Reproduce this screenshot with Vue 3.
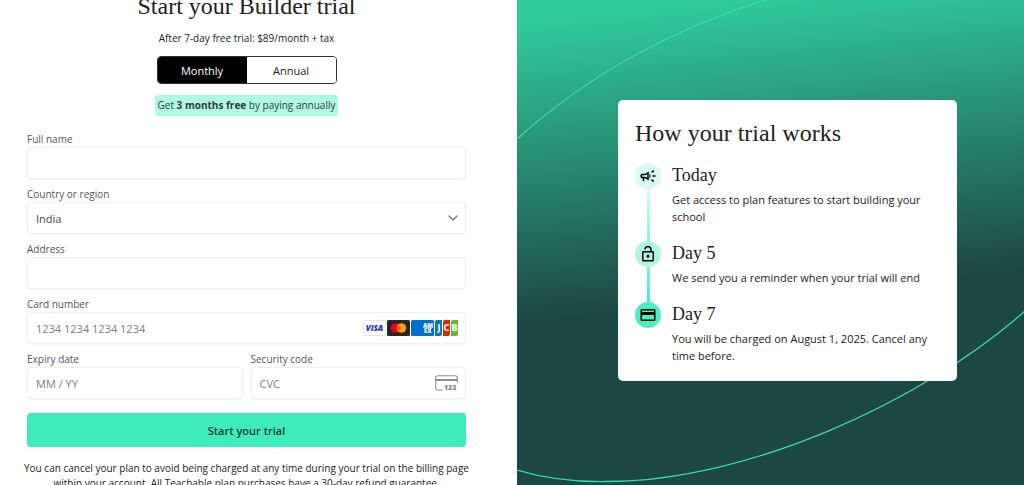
<script setup>
import { ref } from 'vue'

const plan = ref('monthly')
const country = ref('India')
const steps = [
  { id: 'today', title: 'Today', text: 'Get access to plan features to start building your school' },
  { id: 'reminder', title: 'Day 5', text: 'We send you a reminder when your trial will end' },
  { id: 'charge', title: 'Day 7', text: 'You will be charged on August 1, 2025. Cancel any time before.' },
]
</script>

<template>
  <main class="page">
    <section class="checkout">
      <h1 class="title">Start your Builder trial</h1>
      <p class="price">After 7-day free trial: $89/month + tax</p>
      <div class="toggle" role="group" aria-label="Billing period">
        <button type="button" :class="{ active: plan === 'monthly' }" :aria-pressed="plan === 'monthly'" @click="plan = 'monthly'">Monthly</button>
        <button type="button" :class="{ active: plan === 'annual' }" :aria-pressed="plan === 'annual'" @click="plan = 'annual'">Annual</button>
      </div>
      <p class="offer">Get <strong>3 months free</strong> by paying annually</p>

      <form class="form" @submit.prevent>
        <div class="field">
          <label for="name">Full name</label>
          <input id="name" type="text" class="control" />
        </div>
        <div class="field">
          <label for="country">Country or region</label>
          <div class="wrap">
            <select id="country" v-model="country" class="control">
              <option>India</option>
            </select>
            <svg class="chevron" width="10" height="6" viewBox="0 0 10 6" aria-hidden="true">
              <path d="M1 1l4 4 4-4" fill="none" stroke="#6f6f7c" stroke-width="1.3" stroke-linecap="round" stroke-linejoin="round" />
            </svg>
          </div>
        </div>
        <div class="field">
          <label for="address">Address</label>
          <input id="address" type="text" class="control" />
        </div>
        <div class="field">
          <label for="card">Card number</label>
          <div class="wrap">
            <input id="card" type="text" class="control" placeholder="1234 1234 1234 1234" />
            <div class="adorn brands" aria-hidden="true">
              <svg width="23" height="16" viewBox="0 0 23 16">
                <rect x=".5" y=".5" width="22" height="15" rx="1.5" fill="#fff" stroke="#e4e4e8" />
                <text x="11.5" y="11" text-anchor="middle" class="logo visa">VISA</text>
              </svg>
              <svg width="23" height="16" viewBox="0 0 23 16">
                <rect width="23" height="16" rx="1.5" fill="#252525" />
                <circle cx="8.6" cy="8" r="4.8" fill="#eb001b" />
                <circle cx="14.4" cy="8" r="4.8" fill="#f79e1b" />
                <path d="M11.5 4.2a4.8 4.8 0 0 1 0 7.6 4.8 4.8 0 0 1 0-7.6z" fill="#ff5f00" />
              </svg>
              <svg width="23" height="16" viewBox="0 0 23 16">
                <rect width="23" height="16" rx="1.5" fill="#016fd0" />
                <text x="12" y="7.5" class="logo amex">AM</text>
                <text x="13" y="13" class="logo amex">EX</text>
              </svg>
              <svg width="23" height="16" viewBox="0 0 23 16">
                <path d="M2 0h5v14a2 2 0 0 1-2 2H0V2a2 2 0 0 1 2-2z" fill="#047ab1" />
                <path d="M10 0h5v14a2 2 0 0 1-2 2H8V2a2 2 0 0 1 2-2z" fill="#d42d06" />
                <path d="M18 0h5v14a2 2 0 0 1-2 2h-5V2a2 2 0 0 1 2-2z" fill="#67b637" />
                <text x="4" y="11" text-anchor="middle" class="logo jcb">J</text>
                <text x="11.5" y="11" text-anchor="middle" class="logo jcb">C</text>
                <text x="19.5" y="11" text-anchor="middle" class="logo jcb">B</text>
              </svg>
            </div>
          </div>
        </div>
        <div class="row">
          <div class="field">
            <label for="expiry">Expiry date</label>
            <input id="expiry" type="text" class="control" placeholder="MM / YY" />
          </div>
          <div class="field">
            <label for="cvc">Security code</label>
            <div class="wrap">
              <input id="cvc" type="text" class="control" placeholder="CVC" />
              <svg class="adorn" width="23" height="16" viewBox="0 0 23 16" aria-hidden="true">
                <path d="M7.5 15H3A2.3 2.3 0 0 1 .7 12.7V3A2.3 2.3 0 0 1 3 .7h17A2.3 2.3 0 0 1 22.3 3v5" fill="none" stroke="#8c8c94" stroke-width="1.1" />
                <path d="M1 4h21v2H1z" fill="#8c8c94" />
                <text x="9" y="15" class="logo digits">123</text>
              </svg>
            </div>
          </div>
        </div>
        <button type="submit" class="submit">Start your trial</button>
      </form>
      <p class="terms">You can cancel your plan to avoid being charged at any time during your trial on the billing page within your account. All Teachable plan purchases have a 30-day refund guarantee.</p>
    </section>

    <aside class="promo">
      <svg class="orbit" viewBox="0 0 507 485" preserveAspectRatio="xMidYMid slice" aria-hidden="true">
        <path d="M0 139C75 71 165 25 252 -1" />
        <path d="M0 470C30 479 60 482 90 481.5C230 481.5 405 402 508 311" />
      </svg>
      <div class="card">
        <h2>How your trial works</h2>
        <ol class="steps">
          <li v-for="step in steps" :key="step.id" :class="['step', step.id]">
            <span class="dot">
              <svg width="18" height="18" viewBox="0 0 24 24" aria-hidden="true">
                <path v-if="step.id === 'today'" d="M18 11v2h4v-2h-4zM16 17.61c.96.71 2.21 1.65 3.2 2.39.4-.53.8-1.07 1.2-1.6-.99-.74-2.24-1.68-3.2-2.4-.4.54-.8 1.08-1.2 1.61zM20.4 5.6c-.4-.53-.8-1.07-1.2-1.6-.99.74-2.24 1.68-3.2 2.4.4.53.8 1.07 1.2 1.6.96-.72 2.21-1.65 3.2-2.4zM4 9c-1.1 0-2 .9-2 2v2c0 1.1.9 2 2 2h1v4h2v-4h1l5 3V6L8 9H4zm5.03 1.71L11 9.53v4.94l-1.97-1.18-.48-.29H4v-2h4.55l.48-.29zM15.5 12c0-1.33-.58-2.53-1.5-3.35v6.69c.92-.81 1.5-2.01 1.5-3.34z" />
                <path v-else-if="step.id === 'reminder'" d="M12 17c1.1 0 2-.9 2-2s-.9-2-2-2-2 .9-2 2 .9 2 2 2zm6-9h-1V6c0-2.76-2.24-5-5-5S7 3.24 7 6h1.9c0-1.71 1.39-3.1 3.1-3.1s3.1 1.39 3.1 3.1v2H6c-1.1 0-2 .9-2 2v10c0 1.1.9 2 2 2h12c1.1 0 2-.9 2-2V10c0-1.1-.9-2-2-2zm0 12H6V10h12v10z" />
                <path v-else d="M20 4H4c-1.11 0-1.99.89-1.99 2L2 18c0 1.11.89 2 2 2h16c1.11 0 2-.89 2-2V6c0-1.11-.89-2-2-2zm0 14H4v-6h16v6zm0-10H4V6h16v2z" />
              </svg>
            </span>
            <div>
              <h3>{{ step.title }}</h3>
              <p>{{ step.text }}</p>
            </div>
          </li>
        </ol>
      </div>
    </aside>
  </main>
</template>

<style>
body {
  margin: 0;
  overflow: hidden;
}
</style>

<style scoped>
* {
  box-sizing: border-box;
}
h1, h2, h3, p, ol {
  margin: 0;
  padding: 0;
}
.page {
  display: grid;
  grid-template-columns: 517fr 507fr;
  grid-template-rows: 100%;
  height: 100vh;
  overflow: hidden;
  background: #fff;
  color: #222;
  font-family: "Open Sans", "Noto Sans", sans-serif;
  font-size: 11px;
}
button, input, select {
  font: inherit;
}
.checkout {
  display: flex;
  flex-direction: column;
  align-items: center;
  padding: 0 51px 0 27px;
}
.checkout > * {
  flex-shrink: 0;
}
.title {
  margin-top: -10px;
  font: 400 24px/32px "Liberation Serif", serif;
  white-space: nowrap;
}
.price {
  margin-top: 8px;
  font-size: 10px;
  line-height: 16px;
}
.toggle {
  display: grid;
  grid-template-columns: 1fr 1fr;
  width: 180px;
  height: 28px;
  margin-top: 10px;
  border: 1px solid #333;
  border-radius: 4px;
  overflow: hidden;
}
.toggle button {
  padding: 0;
  border: 0;
  background: #fff;
  color: #222;
}
.toggle .active {
  background: #000;
  color: #fff;
}
.offer {
  margin-top: 11px;
  padding: 0 3px;
  border-radius: 3px;
  background: #b1f8e3;
  color: #29423c;
  font-size: 10px;
  line-height: 21px;
}
.form {
  display: flex;
  flex-direction: column;
  gap: 7px;
  width: 100%;
  margin-top: 15px;
}
.field {
  display: flex;
  flex-direction: column;
}
.field label {
  color: #54545d;
  font-size: 10px;
  line-height: 16px;
}
.wrap {
  position: relative;
}
.control {
  display: block;
  width: 100%;
  height: 32px;
  padding: 0 8px;
  border: 1px solid #eeeef0;
  border-radius: 4px;
  outline: 0;
  background: #fff;
  box-shadow: 0 1px 2px rgba(0, 0, 0, 0.04);
  color: #44444d;
  appearance: none;
}
.control::placeholder {
  color: #7d7d84;
  opacity: 1;
}
.chevron {
  position: absolute;
  top: 13px;
  right: 8px;
  pointer-events: none;
}
.adorn {
  position: absolute;
  top: 8px;
  right: 8px;
}
.brands {
  display: flex;
  gap: 1px;
}
.logo {
  font-family: "Open Sans", sans-serif;
  font-weight: 800;
}
.visa {
  fill: #2434bd;
  font-size: 8px;
  font-style: italic;
}
.amex {
  fill: #fff;
  font-size: 6px;
}
.jcb {
  fill: #fff;
  font-family: "DejaVu Sans", sans-serif;
  font-size: 8px;
}
.digits {
  fill: #85858e;
  font-size: 7px;
}
.row {
  display: grid;
  grid-template-columns: 1fr 1fr;
  gap: 8px;
}
.submit {
  height: 34px;
  margin-top: 7px;
  border: 0;
  border-radius: 4px;
  background: #3decba;
  color: #1d3b35;
  font-weight: 600;
}
.terms {
  align-self: stretch;
  margin: 14px -8px 0;
  font-size: 10px;
  line-height: 15px;
  text-align: center;
}
.promo {
  position: relative;
  padding: 100px 67px 0 101px;
  background: linear-gradient(174deg, #30c99a 5%, #1d4742 60%);
}
.orbit {
  position: absolute;
  inset: 0;
  width: 100%;
  height: 100%;
}
.orbit path {
  fill: none;
  stroke: #35dba8;
  stroke-width: 1.3;
}
.card {
  position: relative;
  padding: 17px;
  border-radius: 5px;
  background: #fff;
}
h2 {
  font: 400 24px/32px "Liberation Serif", serif;
}
.steps {
  display: flex;
  flex-direction: column;
  gap: 16px;
  margin-top: 14px;
  list-style: none;
}
.step {
  position: relative;
  display: grid;
  grid-template-columns: 26px 1fr;
  gap: 11px;
}
.dot {
  display: grid;
  place-items: center;
  width: 26px;
  height: 26px;
  border-radius: 50%;
}
.today .dot {
  background: #d7fbf0;
}
.reminder .dot {
  background: #aef6e0;
}
.charge .dot {
  background: #48efc0;
}
.step:not(:last-child)::before {
  content: "";
  position: absolute;
  top: 26px;
  bottom: -16px;
  left: 12px;
  width: 3px;
  background: linear-gradient(#d7fbf0, #8cf3d5);
}
.step.reminder::before {
  background: linear-gradient(#7df2d0, #48efc0);
}
h3 {
  font: 400 18px/24px "Liberation Serif", serif;
}
.step p {
  margin-top: 4px;
  line-height: 17px;
}
</style>
